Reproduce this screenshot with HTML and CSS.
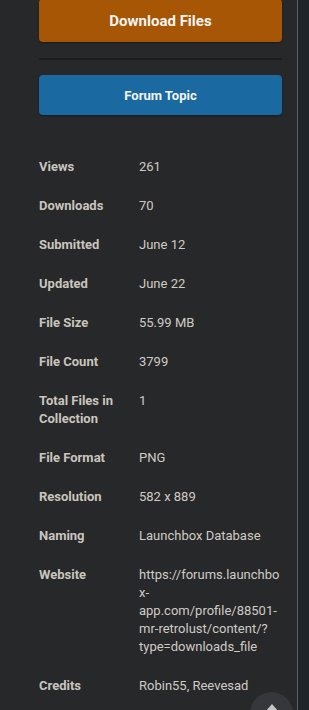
FILE: index.html
```html
<!DOCTYPE html>
<html lang="en">

<head>
    <meta charset="UTF-8">
    <meta name="viewport" content="width=device-width, initial-scale=1.0">
    <title>File Details</title>
    <link rel="stylesheet" href="styles.css">
</head>

<body>
    <div class="page">
        <aside class="sidebar">
            <a class="btn btn-download" href="#">Download Files</a>
            <hr class="divider">
            <a class="btn btn-topic" href="#">Forum Topic</a>

            <dl class="details">
                <div class="row"><dt>Views</dt><dd>261</dd></div>
                <div class="row"><dt>Downloads</dt><dd>70</dd></div>
                <div class="row"><dt>Submitted</dt><dd>June 12</dd></div>
                <div class="row"><dt>Updated</dt><dd>June 22</dd></div>
                <div class="row"><dt>File Size</dt><dd>55.99 MB</dd></div>
                <div class="row"><dt>File Count</dt><dd>3799</dd></div>
                <div class="row"><dt>Total Files in Collection</dt><dd>1</dd></div>
                <div class="row"><dt>File Format</dt><dd>PNG</dd></div>
                <div class="row"><dt>Resolution</dt><dd>582 x 889</dd></div>
                <div class="row"><dt>Naming</dt><dd>Launchbox Database</dd></div>
                <div class="row"><dt>Website</dt><dd class="url">https://forums.launchbox-app.com/profile/88501-mr-retrolust/content/?<wbr>type=downloads_file</dd></div>
                <div class="row"><dt>Credits</dt><dd>Robin55, Reevesad</dd></div>
            </dl>
        </aside>
        <div class="rail"></div>
    </div>

    <button class="to-top" aria-label="Back to top">
        <svg width="16" height="14" viewBox="0 0 16 14">
            <path d="M8 1 L15 9 L11.5 12 L8 8 L4.5 12 L1 9 Z" fill="#c4c5c7"/>
        </svg>
    </button>
</body>
</html>
```

FILE: styles.css
```css
body {
    margin: 0;
    background-color: #27282a;
    font-family: Roboto, "Liberation Sans", Arial, sans-serif;
    font-size: 13px;
    color: #cdc9c2;
    overflow: hidden;
}

.page {
    display: flex;
    min-height: 100vh;
}

.sidebar {
    flex: 1;
    padding: 0 15px 0 39px;
}

.rail {
    width: 11px;
    border-left: 1px solid #5b6068;
    background-color: #1f232a;
}

.btn {
    display: flex;
    align-items: center;
    justify-content: center;
    color: #f4f4f4;
    font-weight: 700;
    text-decoration: none;
    border-radius: 4px;
    box-shadow: 0 1px 2px rgba(0, 0, 0, 0.35);
}

.btn-download {
    height: 43px;
    margin-top: -1px;
    font-size: 15px;
    background-color: #a65604;
}

.btn-topic {
    height: 40px;
    font-size: 13px;
    background-color: #1a69a0;
}

.divider {
    height: 2px;
    margin: 16px 0 15px;
    border: none;
    background-color: #1c1d1f;
}

.details {
    margin: 33px 0 0;
}

.row {
    display: flex;
    padding: 10px 0 11px;
    line-height: 18px;
}

.row dt {
    width: 90px;
    flex-shrink: 0;
    margin-right: 10px;
    font-weight: 700;
    color: #c9c5bd;
}

.row dd {
    flex: 1;
    min-width: 0;
    margin: 0;
    color: #cfcbc4;
}

.url {
    overflow-wrap: anywhere;
}

.to-top {
    position: fixed;
    right: 16px;
    bottom: -25px;
    width: 43px;
    height: 43px;
    padding: 11px 0 0;
    border: none;
    border-radius: 50%;
    background-color: #35373a;
    display: flex;
    align-items: flex-start;
    justify-content: center;
}
```
